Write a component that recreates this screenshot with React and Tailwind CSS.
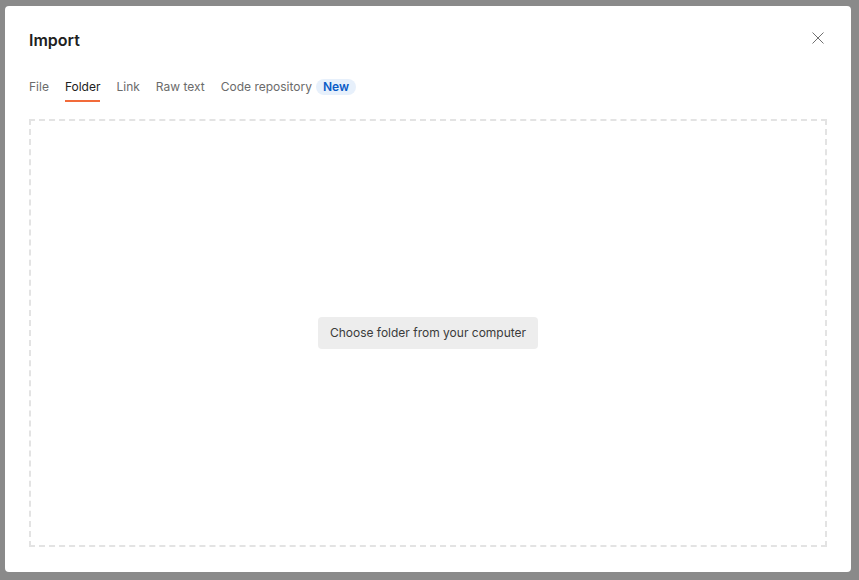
import React, { useState } from 'react';

const tabs = ['File', 'Folder', 'Link', 'Raw text', 'Code repository'];

const App = () => {
  const [active, setActive] = useState('Folder');

  return (
    <div className="h-[580px] w-full bg-[#8a8a8a] pt-[6px] pl-[5px] pr-[8px] pb-[8px] font-['Inter',sans-serif]">
      <div className="flex h-full flex-col rounded-[4px] bg-white px-6 pt-[22px] pb-[25px]">
        {/* header */}
        <div className="flex items-center justify-between">
          <h1 className="text-[16px] leading-6 font-semibold text-[#212121]">Import</h1>
          <button className="mr-[3px] mb-[4px] text-[#707070]">
            <svg width="12" height="12" viewBox="0 0 12 12" fill="none" stroke="currentColor" strokeWidth="1">
              <path d="M0.5 0.5l11 11M11.5 0.5l-11 11" />
            </svg>
          </button>
        </div>

        {/* tabs */}
        <div className="mt-[25px] flex items-start gap-4">
          {tabs.map((t) => (
            <button
              key={t}
              onClick={() => setActive(t)}
              className={
                'flex flex-col text-[12px] leading-5 ' +
                (active === t ? 'text-[#212121]' : 'text-[#6b6b6b]')
              }
            >
              <span className="flex items-center gap-1">
                {t}
                {t === 'Code repository' && (
                  <span className="rounded-full bg-[#e7f0fb] px-[7px] text-[12px] leading-4 font-semibold text-[#0a5cc7]">New</span>
                )}
              </span>
              <span className={'mt-[3px] h-[2px] w-full ' + (active === t && t !== 'Code repository' ? 'bg-[#f26b3a]' : 'bg-transparent')} />
            </button>
          ))}
        </div>

        {/* drop area */}
        <div className="mt-[17px] flex flex-1 items-center justify-center border-2 border-dashed border-[#e3e3e3]">
          <button className="rounded-[4px] bg-[#ededed] px-3 py-[6px] text-[12px] leading-5 text-[#3b3b3b]">
            Choose folder from your computer
          </button>
        </div>
      </div>
    </div>
  );
};

export default App;
